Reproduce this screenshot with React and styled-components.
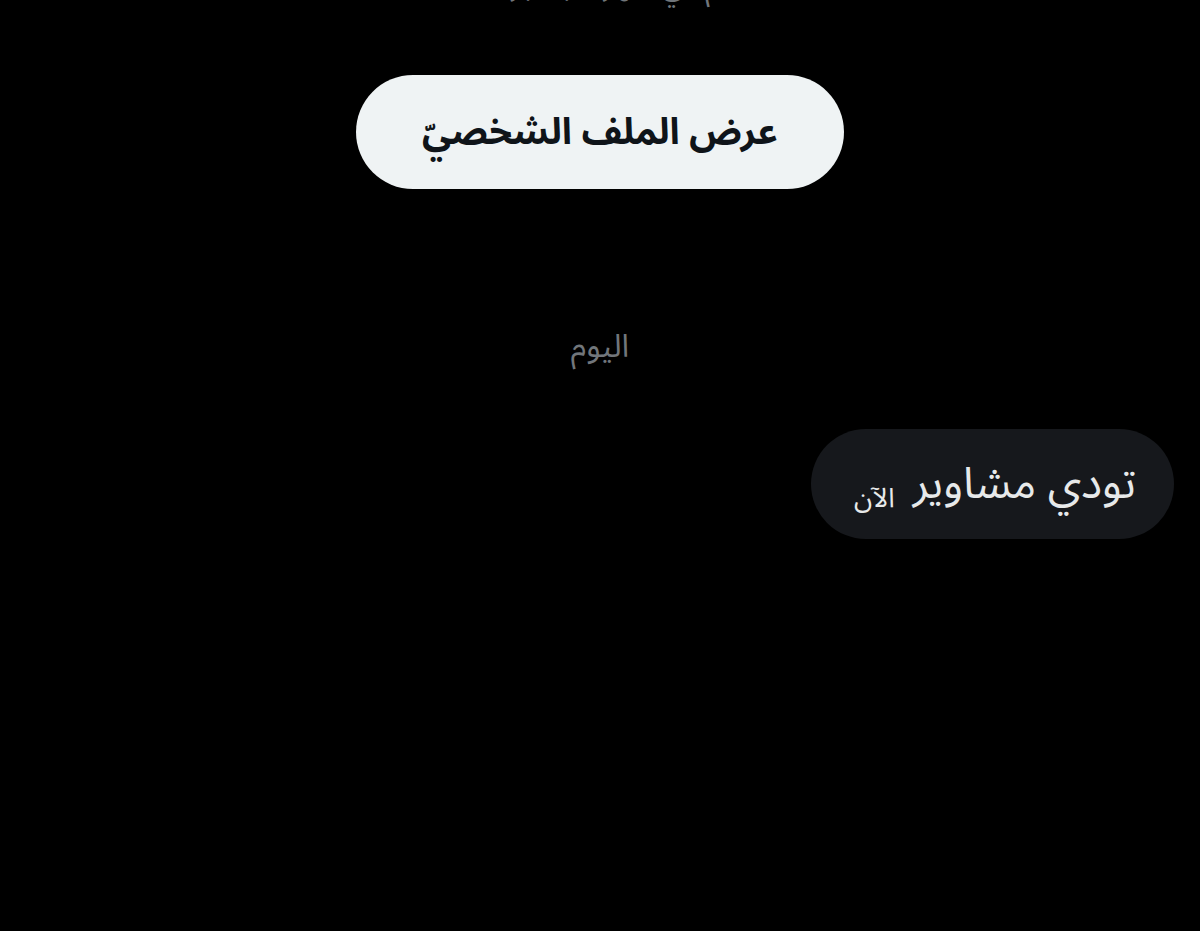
import React from "react";
import styled, { createGlobalStyle } from "styled-components";

const GlobalStyle = createGlobalStyle`
  html, body {
    margin: 0;
    padding: 0;
    background: #000;
  }
  body {
    font-family: "Noto Sans Arabic", "Noto Sans", "DejaVu Sans", sans-serif;
  }
`;

const Page = styled.div`
  width: 1200px;
  height: 931px;
  overflow: hidden;
  background: #000;
  display: flex;
  flex-direction: column;
  align-items: center;
  direction: rtl;
`;

const CutLine = styled.div`
  margin-top: -34px;
  height: 40px;
  color: #71767b;
  font-size: 30px;
  line-height: 40px;
  white-space: nowrap;
`;

const ProfileButton = styled.button`
  margin-top: 69px;
  width: 488px;
  height: 114px;
  border: none;
  border-radius: 57px;
  background: #eff3f4;
  color: #0f1419;
  font-family: inherit;
  font-size: 37px;
  font-weight: 700;
  cursor: pointer;
`;

const DayLabel = styled.div`
  margin-top: 134px;
  color: #71767b;
  font-size: 32px;
  line-height: 48px;
`;

const Thread = styled.div`
  align-self: stretch;
  display: flex;
  padding: 0 26px;
  margin-top: 58px;
`;

const Bubble = styled.div`
  height: 110px;
  border-radius: 55px;
  background: #16181c;
  display: flex;
  align-items: center;
  gap: 18px;
  padding: 0 38px 0 43px;
`;

const MessageText = styled.span`
  color: #e7e9ea;
  font-size: 44px;
  line-height: 1;
`;

const Time = styled.span`
  color: #e7e9ea;
  font-size: 27px;
  margin-top: 28px;
`;

export default function App() {
  return (
    <>
      <GlobalStyle />
      <Page>
        <CutLine>انضمّ في شهر سبتمبر ٢٠٢١</CutLine>
        <ProfileButton>عرض الملف الشخصيّ</ProfileButton>
        <DayLabel>اليوم</DayLabel>
        <Thread>
          <Bubble>
            <MessageText>تودي مشاوير</MessageText>
            <Time>الآن</Time>
          </Bubble>
        </Thread>
      </Page>
    </>
  );
}
